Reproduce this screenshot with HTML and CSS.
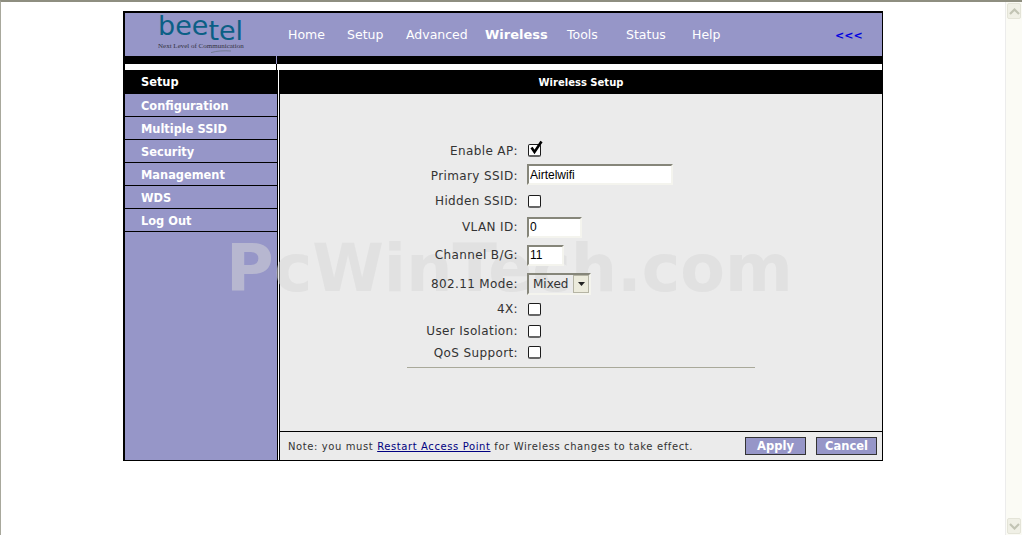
FILE: index.html
```html
<!DOCTYPE html>
<html lang="en">
<head>
<meta charset="utf-8">
<title>Wireless Setup</title>
<link rel="stylesheet" href="styles.css">
</head>
<body>
<div class="window">
  <div class="page">
    <div class="frame">
      <header class="header">
        <div class="logo">
          <div class="logo-word">bee<span class="logo-drop">tel</span></div>
          <div class="logo-tag">Next Level of Communication</div>
          <svg class="logo-swoosh" width="20" height="3" viewBox="0 0 20 3"><path d="M0 2.6C6 0.8 13 0.5 20 1" fill="none" stroke="#6a7484" stroke-width="0.8"/></svg>
        </div>
        <nav class="nav">
          <a>Home</a><a>Setup</a><a>Advanced</a><a class="current">Wireless</a><a>Tools</a><a>Status</a><a>Help</a>
        </nav>
        <a class="collapse">&lt;&lt;&lt;</a>
      </header>
      <div class="band"><div class="band-left"></div><div class="band-right"></div></div>
      <div class="stripe"><div class="stripe-left"></div><div class="stripe-right"></div></div>
      <div class="body">
        <aside class="side">
          <a class="side-item active">Setup</a>
          <a class="side-item">Configuration</a>
          <a class="side-item">Multiple SSID</a>
          <a class="side-item">Security</a>
          <a class="side-item">Management</a>
          <a class="side-item">WDS</a>
          <a class="side-item">Log Out</a>
        </aside>
        <main class="panel">
          <h1 class="panel-title">Wireless Setup</h1>
          <div class="panel-body">
            <form class="form">
              <div class="row h25"><label>Enable AP:</label><span class="check-wrap"><input type="checkbox" class="check"><svg class="tick" width="16" height="16" viewBox="0 0 16 16"><path d="M3.5 7.5L6.5 12L13.5 1.5" fill="none" stroke="#000" stroke-width="2.6"/></svg></span></div>
              <div class="row h25"><label>Primary SSID:</label><input class="text w-lg" type="text" value="Airtelwifi"></div>
              <div class="row h26"><label>Hidden SSID:</label><input type="checkbox" class="check"></div>
              <div class="row h26"><label>VLAN ID:</label><input class="text w-md" type="text" value="0"></div>
              <div class="row h30"><label>Channel B/G:</label><input class="text w-sm" type="text" value="11"></div>
              <div class="row h28"><label>802.11 Mode:</label><span class="select"><span class="select-value">Mixed</span><span class="select-btn"><svg width="7" height="4" viewBox="0 0 7 4"><path d="M0 0H7L3.5 4Z" fill="#222"/></svg></span></span></div>
              <div class="row h22"><label>4X:</label><input type="checkbox" class="check"></div>
              <div class="row h22"><label>User Isolation:</label><input type="checkbox" class="check"></div>
              <div class="row h21"><label>QoS Support:</label><input type="checkbox" class="check"></div>
              <hr class="rule">
            </form>
          </div>
          <footer class="footer">
            <p class="note">Note: you must <a class="note-link">Restart Access Point</a> for Wireless changes to take effect.</p>
            <button class="btn btn-apply" type="button">Apply</button>
            <button class="btn btn-cancel" type="button">Cancel</button>
          </footer>
        </main>
      </div>
      <div class="watermark">PcWinTech.com</div>
    </div>
  </div>
  <div class="scrollbar">
    <div class="sb-btn"><svg width="11" height="7" viewBox="0 0 11 7"><path d="M1 6L5.5 1.5L10 6" fill="none" stroke="#c2c4b4" stroke-width="2.2"/></svg></div>
    <div class="sb-track"></div>
    <div class="sb-btn"><svg width="11" height="7" viewBox="0 0 11 7"><path d="M1 1L5.5 5.5L10 1" fill="none" stroke="#c2c4b4" stroke-width="2.2"/></svg></div>
  </div>
</div>
</body>
</html>
```
FILE: styles.css
```css
* { box-sizing: border-box; }
html, body { margin: 0; height: 100%; overflow: hidden; background: #fff; }
body { font-family: "DejaVu Sans", Verdana, sans-serif; }
.window {
  display: flex;
  height: 535px;
  width: 1022px;
  border-top: 2px solid #8e8e80;
  border-left: 1px solid #a8a89c;
}
.page { width: 1004px; padding: 9px 0 0 122px; }
.frame {
  position: relative;
  width: 760px;
  height: 450px;
  border: solid #000;
  border-width: 2px 1px 1px 2px;
  display: flex;
  flex-direction: column;
}
.header {
  height: 43px;
  background: #9696c8;
  display: flex;
  align-items: center;
  flex: none;
}
.logo { width: 163px; height: 43px; padding: 0 0 0 33px; color: #0b5f85; position: relative; flex: none; }
.logo-word {
  font-family: "DejaVu Sans", sans-serif;
  font-size: 27px;
  line-height: 29px;
  height: 29px;
  margin-top: -2px;
  white-space: nowrap;
}
.logo-drop { position: relative; top: 5px; }
.logo-tag {
  font-family: "Liberation Serif", serif;
  font-size: 7px;
  line-height: 9px;
  color: #33333f;
  white-space: nowrap;
  margin-top: 2px;
}
.logo-swoosh { position: absolute; left: 86px; top: 37px; }
.nav {
  display: grid;
  grid-template-columns: 59px 59px 79px 82px 59px 66px 60px;
  color: #fff;
  font-size: 12.5px;
  line-height: 16px;
  flex: none;
  margin-top: 1px;
}
.nav .current { font-weight: bold; font-size: 13px; }
.collapse { margin-left: 83px; color: #0000e0; font-size: 11px; font-weight: bold; margin-top: 2px; }
.band { height: 8px; display: flex; background: #000; flex: none; }
.band-left { width: 152px; border-right: 1px solid #9696c8; }
.band-right { flex: 1; }
.stripe { height: 6px; display: flex; background: #fff; flex: none; }
.stripe-left { width: 152px; border-right: 1px solid #000; }
.stripe-right { flex: 1; }
.body { flex: 1; display: flex; min-height: 0; }
.side {
  width: 153px;
  background: #9696c8;
  border-right: 1px solid #000;
  flex: none;
  display: flex;
  flex-direction: column;
}
.side-item {
  height: 23px;
  border-bottom: 1px solid #000;
  padding-left: 16px;
  color: #fff;
  font-size: 11.4px;
  font-weight: bold;
  line-height: 24px;
}
.side-item.active { height: 24px; background: #000; border-bottom: 0; line-height: 25px; }
.panel {
  margin-left: 1px;
  flex: 1;
  min-width: 0;
  background: #ebebeb;
  border-left: 1px solid #000;
  display: flex;
  flex-direction: column;
}
.panel-title {
  margin: 0;
  height: 24px;
  background: #000;
  color: #fff;
  font-size: 10px;
  font-weight: bold;
  line-height: 26px;
  text-align: center;
  flex: none;
}
.panel-body { flex: 1; padding: 44px 0 0; }
.form { width: 348px; margin-left: 127px; position: relative; z-index: 1; }
.row { display: flex; align-items: center; }
.row label {
  width: 111px;
  text-align: right;
  margin-right: 9px;
  color: #333;
  font-size: 12px;
  letter-spacing: 0.38px;
  flex: none;
}
.h25 { height: 25px; }
.h26 { height: 26px; }
.h30 { height: 30px; }
.h28 { height: 28px; }
.h22 { height: 22px; }
.h21 { height: 21px; }
.check {
  appearance: none;
  margin: 0 0 0 1px;
  width: 13px;
  height: 13px;
  background: #fff;
  border: 1px solid #1c1c1c;
  border-bottom: 2px solid #666;
  border-radius: 2px;
  display: block;
}
.check-wrap { position: relative; display: block; }
.tick { position: absolute; left: 1px; top: -4px; }
.text {
  height: 21px;
  margin: 0;
  padding: 0 0 0 1px;
  background: #fff;
  border: 2px solid;
  border-color: #86867a #f4f4ee #f4f4ee #86867a;
  font-family: "Liberation Sans", Arial, sans-serif;
  font-size: 12px;
  color: #000;
}
.w-lg { width: 146px; margin-bottom: 2px; }
.w-md { width: 55px; }
.w-sm { width: 37px; }
.select {
  width: 64px;
  height: 22px;
  display: flex;
  align-items: center;
  justify-content: space-between;
  border: 2px solid;
  border-color: #86867a #f4f4ee #f4f4ee #86867a;
  font-size: 12px;
  color: #333;
  padding-left: 4px;
}
.select-btn {
  width: 16px;
  height: 18px;
  background: #ecebdc;
  border: 1px solid #b5b4a4;
  display: flex;
  align-items: center;
  justify-content: center;
}
.rule { margin: 4px 0 0; height: 1px; border: 0; background: #a9a99a; }
.footer {
  height: 29px;
  border-top: 1px solid #000;
  display: flex;
  align-items: center;
  padding: 0 5px 0 8px;
  flex: none;
}
.note { margin: 0; flex: 1; font-size: 10px; color: #333; letter-spacing: 0.6px; }
.note-link { color: #000080; text-decoration: underline; }
.btn {
  height: 18px;
  padding: 0;
  background: #9696c8;
  border: 1px solid #333;
  color: #fff;
  font-family: "DejaVu Sans", Verdana, sans-serif;
  font-size: 11.5px;
  font-weight: bold;
  line-height: 16px;
}
.btn-apply { width: 61px; margin-right: 10px; }
.btn-cancel { width: 61px; }
.watermark {
  position: absolute;
  left: 101px;
  top: 218px;
  color: rgba(215, 215, 215, 0.5);
  font-size: 65px;
  font-weight: bold;
  line-height: 76px;
  white-space: nowrap;
  pointer-events: none;
}
.scrollbar {
  width: 17px;
  background: #fbfbf5;
  border-left: 1px solid #ececec;
  padding: 1px;
  display: flex;
  flex-direction: column;
  flex: none;
}
.sb-btn {
  height: 16px;
  background: #f0f0e6;
  border: 1px solid #e4e4d8;
  border-radius: 2px;
  display: flex;
  align-items: center;
  justify-content: center;
  flex: none;
}
.sb-track { flex: 1; }
```
